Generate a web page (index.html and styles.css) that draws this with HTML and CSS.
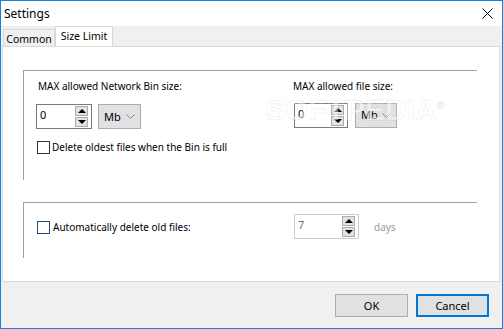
FILE: index.html
```html
<!DOCTYPE html>
<html>

<head>
    <meta charset="UTF-8">
    <title>Settings</title>
    <link rel="stylesheet" href="styles.css">
</head>

<body>
    <div class="window">
        <div class="titlebar">
            <span class="title">Settings</span>
            <svg class="close" width="11" height="11" viewBox="0 0 11 11">
                <path d="M0.5 0.5 L10.5 10.5 M10.5 0.5 L0.5 10.5" stroke="#000" stroke-width="1" fill="none" />
            </svg>
        </div>

        <div class="body">
            <div class="tabs">
                <div class="tab">Common</div>
                <div class="tab active">Size Limit</div>
            </div>

            <div class="panel">
                <div class="group group-size">
                    <div class="cols">
                        <div class="col col-bin">
                            <div class="label">MAX allowed Network Bin size:</div>
                            <div class="row">
                                <div class="spin spin-bin">
                                    <span class="value">0</span>
                                    <div class="arrows">
                                        <div class="arrow up"></div>
                                        <div class="arrow down"></div>
                                    </div>
                                </div>
                                <div class="combo combo-bin">Mb
                                    <svg width="9" height="5" viewBox="0 0 9 5"><path d="M0.5 0.5 L4.5 4.5 L8.5 0.5" stroke="#888" fill="none" /></svg>
                                </div>
                            </div>
                        </div>
                        <div class="col col-file">
                            <div class="label">MAX allowed file size:</div>
                            <div class="row">
                                <div class="spin spin-file">
                                    <span class="value">0</span>
                                    <div class="arrows">
                                        <div class="arrow up"></div>
                                        <div class="arrow down"></div>
                                    </div>
                                </div>
                                <div class="combo combo-file">Mb
                                    <svg width="9" height="5" viewBox="0 0 9 5"><path d="M0.5 0.5 L4.5 4.5 L8.5 0.5" stroke="#888" fill="none" /></svg>
                                </div>
                            </div>
                        </div>
                    </div>
                    <div class="check check-oldest">
                        <span class="box"></span>
                        <span>Delete oldest files when the Bin is full</span>
                    </div>
                </div>

                <div class="group group-auto">
                    <div class="check check-auto">
                        <span class="box focus"></span>
                        <span>Automatically delete old files:</span>
                    </div>
                    <div class="spin spin-days disabled">
                        <span class="value">7</span>
                        <div class="arrows">
                            <div class="arrow up"></div>
                            <div class="arrow down"></div>
                        </div>
                    </div>
                    <span class="days">days</span>
                </div>

                <div class="watermark">SOFTPEDIA<sup>®</sup></div>
            </div>

            <div class="buttons">
                <button class="btn">OK</button>
                <button class="btn default">Cancel</button>
            </div>
        </div>
    </div>
</body>

</html>
```

FILE: styles.css
```css
* {
    box-sizing: border-box;
}

body {
    margin: 0;
    font-family: "Noto Sans", "Open Sans", sans-serif;
    font-size: 10px;
    color: #000;
}

.window {
    width: 503px;
    height: 329px;
    border: 1px solid #1883d7;
    background-color: #f0f0f0;
    display: flex;
    flex-direction: column;
}

/* Title bar */
.titlebar {
    height: 25px;
    background-color: #fff;
    display: flex;
    align-items: center;
    justify-content: space-between;
    padding: 0 9px 0 3px;
}

.title {
    font-size: 12px;
}

.body {
    flex: 1;
    display: flex;
    flex-direction: column;
}

/* Tabs */
.tabs {
    height: 20px;
    display: flex;
    align-items: flex-end;
    padding-left: 2px;
}

.tab {
    height: 17px;
    width: 52px;
    border: 1px solid #d9d9d9;
    border-bottom: none;
    background-color: #f0f0f0;
    display: flex;
    align-items: center;
    justify-content: center;
    padding-top: 1px;
    font-size: 10.5px;
}

.tab.active {
    height: 21px;
    width: 58px;
    margin-bottom: -1px;
    position: relative;
    background-color: #fff;
    padding-top: 0;
    padding-bottom: 3px;
}

.panel {
    height: 236px;
    margin: 0 2px 0 1px;
    border: 1px solid #d9d9d9;
    background-color: #fff;
    padding: 23px 22px 0 20px;
    position: relative;
}

/* Group boxes */
.group {
    border-top: 1px solid #a0a0a0;
    border-left: 1px solid #a0a0a0;
}

.group-size {
    height: 110px;
    padding: 7px 0 0 12px;
}

.group-auto {
    height: 56px;
    margin-top: 22px;
    padding: 11px 0 0 13px;
    display: flex;
    align-items: flex-start;
}

.cols {
    display: flex;
}

.col-bin {
    width: 258px;
}

.label {
    height: 16px;
    line-height: 16px;
    margin: 0 0 10px 2px;
}

.col-file .label {
    margin-left: -1px;
}

.row {
    display: flex;
    align-items: center;
}

/* Spin boxes */
.spin {
    height: 25px;
    border: 1px solid #7a7a7a;
    background-color: #fff;
    display: flex;
    align-items: center;
    justify-content: space-between;
    padding: 0 3px 0 3px;
}

.spin-bin {
    width: 56px;
}

.spin-file {
    width: 54px;
    margin-top: -1px;
}

.spin-days {
    width: 65px;
}

.spin .value {
    font-size: 11px;
    line-height: 16px;
    margin-top: -3px;
}

.spin.disabled {
    border-color: #cccccc;
}

.spin.disabled .value {
    color: #6d6d6d;
}

.arrows {
    display: flex;
    flex-direction: column;
    margin-top: -1px;
}

.arrow {
    width: 13px;
    height: 10px;
    background-color: #e1e1e1;
    border: 1px solid #adadad;
    display: flex;
    align-items: center;
    justify-content: center;
}

.arrow + .arrow {
    margin-top: 1px;
}

.arrow.up::after {
    content: "";
    border-left: 4px solid transparent;
    border-right: 4px solid transparent;
    border-bottom: 4px solid #000;
}

.arrow.down::after {
    content: "";
    border-left: 4px solid transparent;
    border-right: 4px solid transparent;
    border-top: 4px solid #000;
}

/* Combo boxes */
.combo {
    height: 25px;
    background-color: #e1e1e1;
    border: 1px solid #adadad;
    display: flex;
    align-items: center;
    justify-content: space-between;
    padding: 0 5px 0 5px;
    line-height: 16px;
    font-size: 11px;
}

.combo-bin {
    width: 43px;
    margin-left: 6px;
}

.combo-file {
    width: 42px;
    margin-left: 7px;
    margin-top: -2px;
}

/* Check boxes */
.check {
    display: flex;
    align-items: center;
    line-height: 16px;
}

.check-oldest {
    margin: 10px 0 0 1px;
}

.check-auto {
    width: 257px;
    margin-top: 5px;
}

.box {
    width: 13px;
    height: 13px;
    border: 1px solid #333;
    margin-right: 2px;
}

.box.focus {
    border-color: #1e4a74;
    margin-right: 3px;
}

.days {
    color: #9a9a9a;
    margin: 5px 0 0 15px;
    line-height: 16px;
}

/* Watermark over the panel */
.watermark {
    position: absolute;
    left: 262px;
    top: 46px;
    font-family: "Liberation Sans", sans-serif;
    font-weight: bold;
    font-size: 30px;
    color: rgba(255, 255, 255, 0.5);
    -webkit-text-stroke: 1px rgba(0, 0, 0, 0.07);
    pointer-events: none;
}

.watermark sup {
    font-size: 10px;
    font-weight: normal;
}

/* Bottom buttons */
.buttons {
    display: flex;
    justify-content: flex-end;
    gap: 8px;
    padding: 12px 13px 0 0;
}

.btn {
    width: 73px;
    height: 23px;
    background-color: #e1e1e1;
    border: 1px solid #adadad;
    font-family: inherit;
    font-size: 11px;
    padding: 0;
}

.btn.default {
    border: 2px solid #0078d7;
}
```
